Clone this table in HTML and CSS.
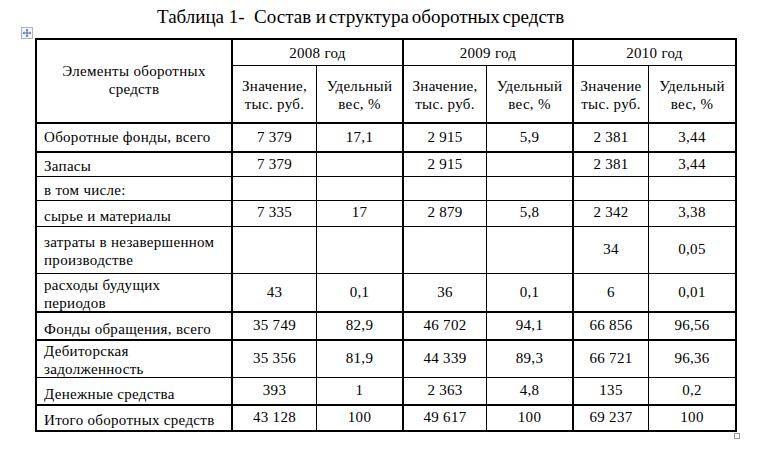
FILE: index.html
```html
<!DOCTYPE html>
<html lang="ru">
<head>
<meta charset="utf-8">
<title>Таблица 1</title>
<link rel="stylesheet" href="styles.css">
</head>
<body>
<div class="page">
  <h1 class="title">Таблица 1-  Состав <span class="tight">и структура оборотных средств</span></h1>
  <div class="table-wrap">
    <span class="move-handle" aria-hidden="true">
      <svg width="12" height="12" viewBox="0 0 12 12">
        <rect x="0.5" y="0.5" width="11" height="11" fill="#f4f6fa" stroke="#a9b4c6"/>
        <path d="M6 2.2V9.8M2.2 6H9.8" stroke="#4a6fb0" stroke-width="1"/>
        <path d="M6 1.8L4.6 3.4H7.4Z M6 10.2L4.6 8.6H7.4Z M1.8 6L3.4 4.6V7.4Z M10.2 6L8.6 4.6V7.4Z" fill="#4a6fb0"/>
      </svg>
    </span>
    <div class="grid">
      <div class="c hd head-label r2">Элементы оборотных<br>средств</div>
      <div class="c hd year r2" style="grid-column: span 2">2008 год</div>
      <div class="c hd year r2" style="grid-column: span 2">2009 год</div>
      <div class="c hd year r2" style="grid-column: span 2">2010 год</div>
      <div class="c hd sub r1 b2">Значение,<br>тыс. руб.</div>
      <div class="c hd sub r2 b2">Удельный<br>вес, %</div>
      <div class="c hd sub r1 b2">Значение,<br>тыс. руб.</div>
      <div class="c hd sub r2 b2">Удельный<br>вес, %</div>
      <div class="c hd sub r1 b2">Значение<br>тыс. руб.</div>
      <div class="c hd sub r2 b2">Удельный<br>вес, %</div>

      <div class="c lbl mid r2 b2">Оборотные фонды, всего</div>
      <div class="c v r1 b2">7 379</div><div class="c v r2 b2">17,1</div>
      <div class="c v r1 b2">2 915</div><div class="c v r2 b2">5,9</div>
      <div class="c v r1 b2">2 381</div><div class="c v r2 b2">3,44</div>

      <div class="c lbl r2 b1">Запасы</div>
      <div class="c v top r1 b1">7 379</div><div class="c v r2 b1"></div>
      <div class="c v top r1 b1">2 915</div><div class="c v r2 b1"></div>
      <div class="c v top r1 b1">2 381</div><div class="c v top r2 b1">3,44</div>

      <div class="c lbl r2 b1">в том числе:</div>
      <div class="c v r1 b1"></div><div class="c v r2 b1"></div>
      <div class="c v r1 b1"></div><div class="c v r2 b1"></div>
      <div class="c v r1 b1"></div><div class="c v r2 b1"></div>

      <div class="c lbl r2 b1">сырье и материалы</div>
      <div class="c v top r1 b1">7 335</div><div class="c v top r2 b1">17</div>
      <div class="c v top r1 b1">2 879</div><div class="c v top r2 b1">5,8</div>
      <div class="c v top r1 b1">2 342</div><div class="c v top r2 b1">3,38</div>

      <div class="c lbl two r2 b1">затраты в незавершенном<br>производстве</div>
      <div class="c v r1 b1"></div><div class="c v r2 b1"></div>
      <div class="c v r1 b1"></div><div class="c v r2 b1"></div>
      <div class="c v r1 b1">34</div><div class="c v r2 b1">0,05</div>

      <div class="c lbl two r2 b2">расходы будущих<br>периодов</div>
      <div class="c v r1 b2">43</div><div class="c v r2 b2">0,1</div>
      <div class="c v r1 b2">36</div><div class="c v r2 b2">0,1</div>
      <div class="c v r1 b2">6</div><div class="c v r2 b2">0,01</div>

      <div class="c lbl r2 b2">Фонды обращения, всего</div>
      <div class="c v r1 b2">35 749</div><div class="c v r2 b2">82,9</div>
      <div class="c v r1 b2">46 702</div><div class="c v r2 b2">94,1</div>
      <div class="c v r1 b2">66 856</div><div class="c v r2 b2">96,56</div>

      <div class="c lbl two r2 b1">Дебиторская<br>задолженность</div>
      <div class="c v r1 b1">35 356</div><div class="c v r2 b1">81,9</div>
      <div class="c v r1 b1">44 339</div><div class="c v r2 b1">89,3</div>
      <div class="c v r1 b1">66 721</div><div class="c v r2 b1">96,36</div>

      <div class="c lbl r2 b2">Денежные средства</div>
      <div class="c v r1 b2">393</div><div class="c v r2 b2">1</div>
      <div class="c v r1 b2">2 363</div><div class="c v r2 b2">4,8</div>
      <div class="c v r1 b2">135</div><div class="c v r2 b2">0,2</div>

      <div class="c lbl r2 b2">Итого оборотных средств</div>
      <div class="c v r1 b2">43 128</div><div class="c v r2 b2">100</div>
      <div class="c v r1 b2">49 617</div><div class="c v r2 b2">100</div>
      <div class="c v r1 b2">69 237</div><div class="c v r2 b2">100</div>
    </div>
    <span class="end-mark" aria-hidden="true"></span>
  </div>
</div>
</body>
</html>
```

FILE: styles.css
```css
html, body {
  margin: 0;
  padding: 0;
  background: #ffffff;
}

body {
  font-family: "Liberation Serif", serif;
  color: #000;
  width: 766px;
  height: 458px;
  overflow: hidden;
}

.page {
  padding-top: 5px;
}

.title {
  margin: 0 0 0 157px;
  font-family: "Liberation Serif", serif;
  font-size: 19px;
  font-weight: normal;
  line-height: 24px;
  white-space: pre;
}

.tight {
  word-spacing: -2px;
}

.table-wrap {
  position: relative;
  margin-left: 35px;
  margin-top: 9px;
  width: 702px;
}

.move-handle {
  position: absolute;
  left: -14px;
  top: -11px;
  width: 12px;
  height: 12px;
  line-height: 0;
}

.end-mark {
  position: absolute;
  left: 699px;
  top: 395px;
  width: 4px;
  height: 4px;
  border: 1px solid #9a9a9a;
}

.grid {
  display: grid;
  grid-template-columns: 196px 84px 87px 83px 87px 75px 88px;
  grid-template-rows: 26px 58px 29px 24px 24px 26px 47px 39px 28px 37px 28px 26px;
  border-left: 2px solid #000;
  border-top: 2px solid #000;
}

.c {
  box-sizing: border-box;
  display: flex;
  min-width: 0;
  white-space: nowrap;
  font-family: "Liberation Serif", serif;
  font-size: 15px;
  line-height: 17px;
  letter-spacing: 0.3px;
}

.r1 { border-right: 1px solid #000; }
.r2 { border-right: 2px solid #000; }
.b1 { border-bottom: 1px solid #000; }
.b2 { border-bottom: 2px solid #000; }

.hd {
  text-align: center;
  justify-content: center;
  align-items: center;
}

.head-label {
  grid-row: span 2;
  border-bottom: 2px solid #000;
  line-height: 18px;
  padding-bottom: 2px;
}

.year {
  border-bottom: 1px solid #000;
  padding-top: 1px;
}

.sub {
  line-height: 18px;
  padding-top: 2px;
}

.lbl {
  align-items: flex-end;
  padding: 0 4px 1px 7px;
}

.lbl.mid {
  align-items: center;
  padding-bottom: 0;
}

.lbl.two {
  align-items: center;
  line-height: 18px;
  padding-bottom: 0;
  padding-top: 2px;
}

.v {
  justify-content: center;
  align-items: center;
  padding-bottom: 1px;
}

.v.top {
  align-items: flex-start;
  padding-top: 3px;
}
```
